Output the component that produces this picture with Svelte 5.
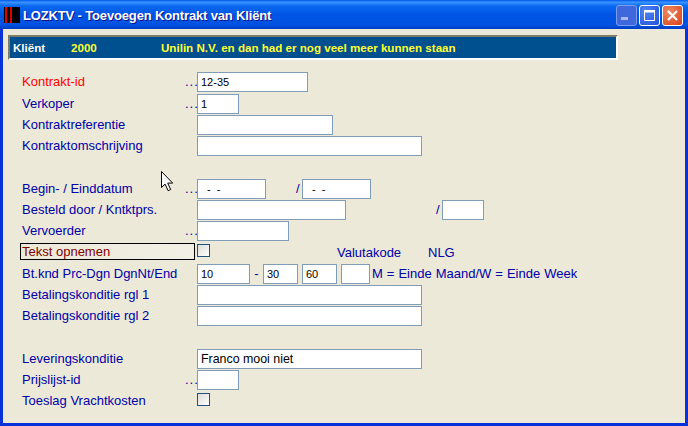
<script lang="ts">
	const betaling = ['Betalingskonditie rgl 1', 'Betalingskonditie rgl 2'];
</script>

<div class="window">
	<div class="titlebar">
		<span class="app-icon"><i></i><i></i></span>
		<span class="title">LOZKTV - Toevoegen Kontrakt van Kliënt</span>
		<span class="buttons">
			<span class="btn min"><svg width="19" height="19" viewBox="0 0 19 19"><rect x="4" y="11" width="7" height="3" fill="#a9b9ee" /></svg></span>
			<span class="btn max"><svg width="19" height="19" viewBox="0 0 19 19"><path d="M4.5 4.5h10v10h-10z" fill="none" stroke="#fff" stroke-width="1" /><rect x="4" y="4" width="11" height="2.5" fill="#fff" /></svg></span>
			<span class="btn close"><svg width="19" height="19" viewBox="0 0 19 19"><path d="M5 5l9 9M14 5l-9 9" stroke="#fff" stroke-width="2.2" fill="none" /></svg></span>
		</span>
	</div>

	<div class="client">
		<div class="band">
			<span class="klient">Kliënt</span>
			<span class="nr">2000</span>
			<span class="naam">Unilin N.V. en dan had er nog veel meer kunnen staan</span>
		</div>

		<div class="form">
			<div class="row first">
				<span class="lbl red">Kontrakt-id</span><span class="dots">...</span>
				<span class="inp w111">12-35</span>
			</div>
			<div class="row">
				<span class="lbl">Verkoper</span><span class="dots">...</span>
				<span class="inp w42">1</span>
			</div>
			<div class="row">
				<span class="lbl">Kontraktreferentie</span><span class="dots"></span>
				<span class="inp w136"></span>
			</div>
			<div class="row">
				<span class="lbl">Kontraktomschrijving</span><span class="dots"></span>
				<span class="inp w225"></span>
			</div>

			<div class="row spaced">
				<span class="lbl">Begin- / Einddatum</span><span class="dots">...</span>
				<span class="inp w69 date">- -</span>
				<span class="slash s1">/</span>
				<span class="inp w69 date">- -</span>
			</div>
			<div class="row">
				<span class="lbl">Besteld door / Kntktprs.</span><span class="dots"></span>
				<span class="inp w149"></span>
				<span class="slash s2">/</span>
				<span class="inp w42"></span>
			</div>
			<div class="row">
				<span class="lbl">Vervoerder</span><span class="dots">...</span>
				<span class="inp w92"></span>
			</div>
			<div class="row tekst">
				<span class="focus">Tekst opnemen</span>
				<span class="check"></span>
				<span class="plain valuta">Valutakode</span>
				<span class="plain nlg">NLG</span>
			</div>
			<div class="row">
				<span class="lbl">Bt.knd Prc-Dgn DgnNt/End</span><span class="dots"></span>
				<span class="inp w53">10</span>
				<span class="plain dash">-</span>
				<span class="inp w35">30</span>
				<span class="inp w35 gap">60</span>
				<span class="inp w29 gap"></span>
				<span class="plain hint">M = Einde Maand/W = Einde Week</span>
			</div>
			{#each betaling as label}
				<div class="row">
					<span class="lbl">{label}</span><span class="dots"></span>
					<span class="inp w225"></span>
				</div>
			{/each}

			<div class="row spaced">
				<span class="lbl">Leveringskonditie</span><span class="dots"></span>
				<span class="inp w225 wide">Franco mooi niet</span>
			</div>
			<div class="row">
				<span class="lbl">Prijslijst-id</span><span class="dots">...</span>
				<span class="inp w42"></span>
			</div>
			<div class="row">
				<span class="lbl">Toeslag Vrachtkosten</span><span class="dots"></span>
				<span class="check"></span>
			</div>
		</div>
	</div>

	<svg class="cursor" width="15" height="23" viewBox="0 0 15 23">
		<path d="M1.5 1.5v16l3.6-3.4 3 6.6 2.6-1.2-3-6.4h5z" fill="#fff" stroke="#000" stroke-width="1" />
	</svg>
</div>

<style>
	:global(body) {
		margin: 0;
	}

	.window {
		position: relative;
		width: 688px;
		height: 426px;
		overflow: hidden;
		display: flex;
		flex-direction: column;
		background: #0831d9;
		font-family: 'Liberation Sans', Arial, sans-serif;
		font-size: 13px;
		color: #0000a8;
	}

	.titlebar {
		height: 29px;
		flex: none;
		display: flex;
		align-items: center;
		box-sizing: border-box;
		padding: 1px 5px 0 4px;
		background: linear-gradient(180deg, #0058ee 0%, #3a93ff 8%, #0a6af0 20%, #0055e5 50%, #0053e0 85%, #003dc4 100%);
	}

	.app-icon {
		width: 16px;
		height: 16px;
		background: #000;
		display: flex;
		gap: 3px;
		padding-left: 1px;
		box-sizing: border-box;
		flex: none;
	}

	.app-icon i {
		width: 2px;
		background: #e00000;
	}

	.title {
		margin-left: 3px;
		color: #fff;
		font-size: 13px;
		font-weight: bold;
		letter-spacing: -0.15px;
		text-shadow: 1px 1px 0 #0f1089;
		flex: 1;
	}

	.buttons {
		display: flex;
		gap: 2px;
	}

	.btn {
		width: 21px;
		height: 21px;
		border: 1px solid #fff;
		border-radius: 3px;
		box-sizing: border-box;
		display: flex;
		align-items: center;
		justify-content: center;
		background: radial-gradient(circle at 30% 30%, #4f86f2, #2450d8);
	}

	.btn svg {
		flex: none;
	}

	.btn.min {
		border-color: #7f9cec;
		background: #3f68dc;
	}

	.btn.close {
		background: radial-gradient(circle at 30% 30%, #ee8a62, #d8401a);
	}

	.client {
		flex: 1;
		margin: 0 3px 3px 3px;
		background: #ece9d8;
		border-top: 1px solid #ece9d8;
		box-sizing: border-box;
	}

	.band {
		margin: 5px 0 0 5px;
		width: 610px;
		height: 25px;
		box-sizing: border-box;
		padding-bottom: 1px;
		background: #00508f;
		border-top: 2px solid #7f7c68;
		border-left: 2px solid #7f7c68;
		border-right: 2px solid #fff;
		border-bottom: 2px solid #fff;
		display: flex;
		align-items: center;
		font-weight: bold;
		font-size: 11.6px;
		color: #ffff33;
	}

	.klient {
		margin-left: 3px;
		width: 58px;
		color: #fff;
	}

	.nr {
		width: 90px;
	}

	.form {
		margin-top: 12px;
		padding-left: 19px;
	}

	.row {
		height: 21px;
		display: flex;
		align-items: flex-start;
	}

	.row.first {
		height: 22px;
	}

	.row.spaced {
		margin-top: 22px;
	}

	.row.tekst {
		height: 22px;
		margin-left: -2px;
		padding-top: 1px;
		box-sizing: border-box;
	}

	.lbl {
		width: 162px;
		flex: none;
		line-height: 20px;
	}

	.lbl.red {
		color: #ff0000;
	}

	.dots {
		width: 13px;
		flex: none;
		line-height: 20px;
		letter-spacing: 1px;
		margin-left: 1px;
		margin-right: -1px;
	}

	.inp {
		height: 20px;
		box-sizing: border-box;
		flex: none;
		background: #fff;
		border: 1px solid #7f9db9;
		padding-left: 3px;
		color: #000;
		font-size: 11px;
		line-height: 18px;
	}

	.wide {
		font-size: 12.4px;
	}

	.w29 { width: 29px; }
	.w35 { width: 35px; }
	.w42 { width: 42px; }
	.w53 { width: 53px; }
	.w69 { width: 69px; }
	.w92 { width: 92px; }
	.w111 { width: 111px; }
	.w136 { width: 136px; }
	.w149 { width: 149px; }
	.w225 { width: 225px; }

	.date {
		padding-left: 9px;
		word-spacing: 3px;
	}

	.slash {
		flex: none;
		line-height: 20px;
	}

	.s1 {
		margin-left: 30px;
		width: 6px;
	}

	.s2 {
		margin-left: 90px;
		width: 6px;
	}

	.focus {
		width: 175px;
		height: 17px;
		flex: none;
		box-sizing: border-box;
		border: 1px solid #000;
		padding-left: 1px;
		line-height: 15px;
		color: #800000;
		background: linear-gradient(90deg, #ece9d8, #f2f0e6);
	}

	.check {
		width: 13px;
		height: 13px;
		flex: none;
		box-sizing: border-box;
		border: 1px solid #1c5180;
		margin: 1px 0 0 2px;
		background: linear-gradient(135deg, #dcdcd7, #ffffff);
	}

	.row:not(.tekst) .check {
		margin-left: 0;
		margin-top: 2px;
	}

	.plain {
		flex: none;
		line-height: 20px;
	}

	.valuta {
		margin-left: 127px;
		width: 91px;
	}

	.dash {
		width: 13px;
		text-align: center;
	}

	.gap {
		margin-left: 4px;
	}

	.hint {
		margin-left: 2px;
		word-spacing: 0.4px;
	}

	.cursor {
		position: absolute;
		left: 160px;
		top: 170px;
	}
</style>
